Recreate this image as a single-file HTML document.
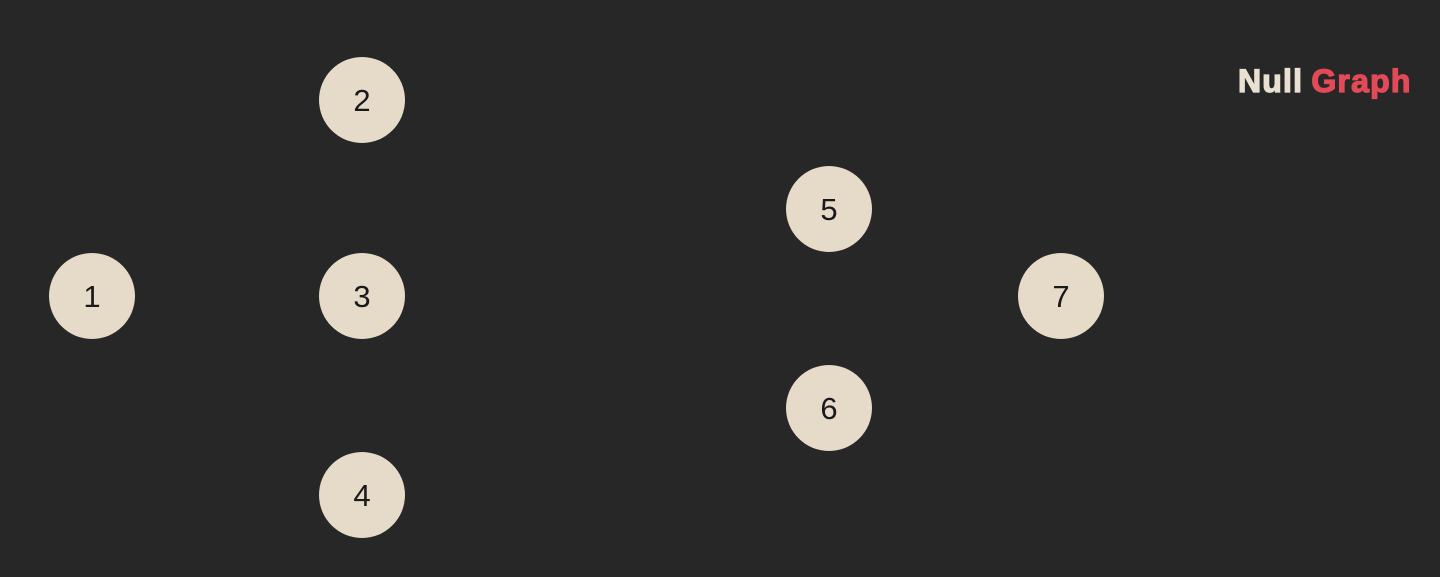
<!DOCTYPE html>
<html><head><style>
html,body{margin:0;padding:0;}
body{width:1440px;height:577px;background:#282727;position:relative;overflow:hidden;font-family:"Liberation Sans",sans-serif;}
.n{position:absolute;width:86px;height:86px;border-radius:50%;background:#e5dbc8;color:#1a1a1a;font-size:31px;line-height:88px;text-align:center;margin:-43px 0 0 -43px;}
.logo{position:absolute;left:1238px;top:63px;font-weight:bold;font-size:32px;color:#e8e1d2;white-space:nowrap;-webkit-text-stroke:1.3px #e8e1d2;letter-spacing:1.2px;word-spacing:-2px;}
.logo span{color:#e34a58;-webkit-text-stroke:1.3px #e34a58;}
</style></head><body>
<div class="logo">Null <span>Graph</span></div>
<div class="n" style="left:92px;top:296px">1</div>
<div class="n" style="left:362px;top:100px">2</div>
<div class="n" style="left:362px;top:296px">3</div>
<div class="n" style="left:362px;top:495px">4</div>
<div class="n" style="left:829px;top:209px">5</div>
<div class="n" style="left:829px;top:408px">6</div>
<div class="n" style="left:1061px;top:296px">7</div>
</body></html>
